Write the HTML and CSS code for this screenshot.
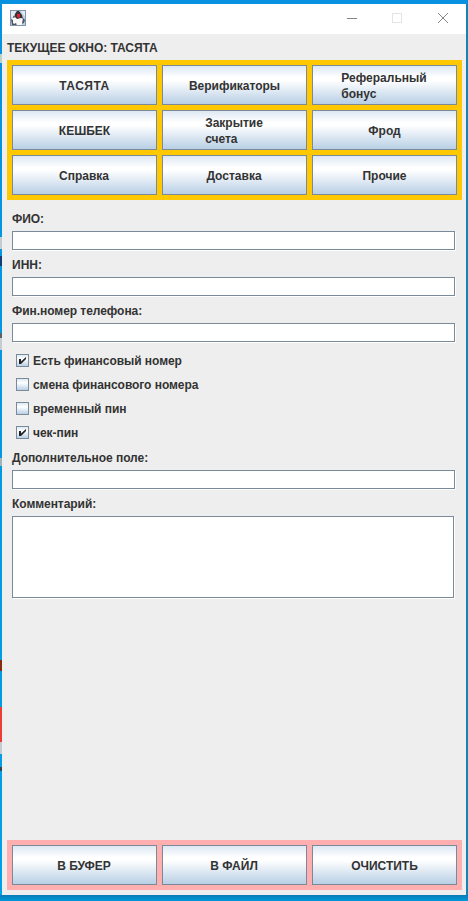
FILE: index.html
```html
<!DOCTYPE html>
<html lang="ru">
<head>
<meta charset="utf-8">
<title>ТАСЯТА</title>
<link rel="stylesheet" href="styles.css">
</head>
<body>
<main class="window">
  <header class="titlebar">
    <svg class="app-icon" width="16" height="16" viewBox="0 0 16 16">
      <rect width="16" height="16" fill="#8094b0"/>
      <path d="M1 1h14v14H1z" fill="#c3d0dc"/>
      <path d="M1 1h5L3 7H1zM11 1h4v6z" fill="#e4ebf1"/>
      <path d="M7 1h2l3 4 1 4-4 2-5-2 1-5z" fill="#30343a"/>
      <path d="M2 8l3-1 2 2 4-1 3 1v4l-3 2H5l-3-3z" fill="#f8f8f8"/>
      <path d="M1 9l2 1v3l2 2H2zM13 8l2 2-1 3-2 1zM5 13l2 1-1 1H4zM3 6l2 1-2 1z" fill="#4a525d"/>
      <path d="M7 4h3v3l-1 1-2-1z" fill="#e4202c"/>
    </svg>
    <svg class="controls" width="104" height="12" viewBox="0 0 104 12" fill="none" shape-rendering="crispEdges">
      <path d="M0 6.500h10" stroke="#858585"/>
      <path d="M45.500 1.500h9v9h-9z" stroke="#e4e4e4"/>
      <path d="M91 1l10 10M101 1L91 11" stroke="#858585" shape-rendering="auto"/>
    </svg>
  </header>
  <h1 class="current">ТЕКУЩЕЕ ОКНО: ТАСЯТА</h1>
  <nav class="panel tabs">
    <button><span class="spaced">ТАСЯТА</span></button>
    <button><span>Верификаторы</span></button>
    <button><span class="nudged">Реферальный<br>бонус</span></button>
    <button><span>КЕШБЕК</span></button>
    <button><span class="nudged">Закрытие<br>счета</span></button>
    <button><span>Фрод</span></button>
    <button><span class="nudged">Справка</span></button>
    <button><span class="nudged">Доставка</span></button>
    <button><span>Прочие</span></button>
  </nav>
  <form class="form">
    <label class="field"><span class="tight">ФИО:</span><input type="text"></label>
    <label class="field"><span>ИНН:</span><input type="text"></label>
    <label class="field"><span class="tight">Фин.номер телефона:</span><input type="text"></label>
    <div class="checks">
      <label><i class="box"><svg width="11" height="11" viewBox="0 0 11 11"><path d="M2 4h2v2.500L9 2v2L4 9H2z" fill="#222"/></svg></i><span class="tight">Есть финансовый номер</span></label>
      <label><i class="box"></i><span class="tight">смена финансового номера</span></label>
      <label><i class="box"></i><span class="tight">временный пин</span></label>
      <label><i class="box"><svg width="11" height="11" viewBox="0 0 11 11"><path d="M2 4h2v2.500L9 2v2L4 9H2z" fill="#222"/></svg></i><span class="tight">чек-пин</span></label>
    </div>
    <label class="field"><span class="tight">Дополнительное поле:</span><input type="text"></label>
    <label class="field"><span class="tight">Комментарий:</span><textarea></textarea></label>
  </form>
  <footer class="panel actions">
    <button><span class="nudged">В БУФЕР</span></button>
    <button><span class="nudged">В ФАЙЛ</span></button>
    <button><span>ОЧИСТИТЬ</span></button>
  </footer>
</main>
</body>
</html>
```
FILE: styles.css
```css
* { box-sizing: border-box; }
body {
  margin: 0;
  height: 901px;
  padding: 4px 2px 6px;
  overflow: hidden;
  background:
    linear-gradient(#842b12, #842b12) 0 660px / 2px 11px no-repeat,
    linear-gradient(#ec3d37, #ec3d37) 0 707px / 2px 35px no-repeat,
    linear-gradient(#c5cbd2, #c5cbd2) 0 742px / 2px 12px no-repeat,
    linear-gradient(#34444c, #34444c) 0 767px / 2px 4px no-repeat,
    linear-gradient(#b9d3c8, #b9d3c8) 0 54px / 2px 9px no-repeat,
    linear-gradient(#c5cbd2, #c5cbd2) 0 237px / 2px 12px no-repeat,
    linear-gradient(#143c78, #143c78) 0 256px / 2px 10px no-repeat,
    linear-gradient(#5c6268, #5c6268) 0 333px / 2px 5px no-repeat,
    linear-gradient(#c5cbd2, #c5cbd2) 0 338px / 2px 12px no-repeat,
    linear-gradient(#9fb3bd, #9fb3bd) 0 458px / 2px 8px no-repeat,
    linear-gradient(#1583b5, #1583b5) 466px 4px / 2px 891px no-repeat,
    linear-gradient(#087cb6, #0098dc) 0 895px / 468px 6px no-repeat,
    linear-gradient(#0791e0, #00a0e6);
  color: #333;
  font: bold 12px/16px "Liberation Sans", Arial, sans-serif;
}
.window {
  display: flex;
  flex-direction: column;
  height: 891px;
  padding-bottom: 5px;
  background: #eee;
}
.titlebar {
  display: flex;
  justify-content: space-between;
  align-items: center;
  height: 30px;
  padding: 0 15px 2px 8px;
  background: #fff;
}
.current { margin: 6px 0 4px 5px; font-size: 12px; line-height: 16px; letter-spacing: -.04px; white-space: nowrap; }
.panel { display: grid; grid-template-columns: repeat(3, 145px); grid-auto-rows: 40px; gap: 5px; margin: 0 4px 0 5px; padding: 5px; }
.tabs { background: #ffc800; }
.tabs button { padding-top: 2px; }
.actions { margin-top: auto; background: #ffafaf; }
.actions button { padding-top: 2px; }
button {
  display: flex;
  align-items: center;
  justify-content: center;
  padding: 0;
  border: 1px solid #7a8a99;
  border-radius: 0;
  background: linear-gradient(#dde8f3, #fff 30%, #fff 38%, #b8cfe5);
  color: inherit;
  font: inherit;
  text-align: left;
  white-space: nowrap;
}
.spaced { letter-spacing: .5px; }
.nudged { margin-right: 1px; }
.tight { letter-spacing: -.05px; }
.form { padding: 11px 10px 0; }
.field { display: block; height: 46px; }
.field span { display: block; width: max-content; height: 16px; white-space: nowrap; }
input, textarea {
  display: block;
  width: 443px;
  height: 19px;
  margin: 4px 0 0;
  padding: 0 2px;
  border: 1px solid #7a8a99;
  border-radius: 0;
  background: #fff;
  box-shadow: 1px 1px 0 #fff;
  font: inherit;
  resize: none;
}
textarea { width: 442px; height: 82px; }
.checks { height: 101px; padding-left: 4px; }
.checks label { display: flex; align-items: center; gap: 4px; height: 24px; white-space: nowrap; }
.box { width: 13px; height: 13px; margin-bottom: 1px; border: 1px solid #7a8a99; background: linear-gradient(#dde8f3, #fff 35%, #b8cfe5); }
.box svg { display: block; }
```
